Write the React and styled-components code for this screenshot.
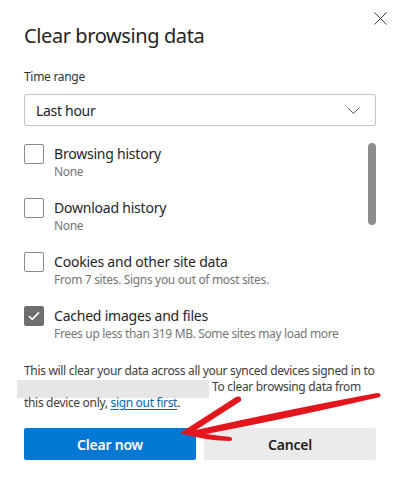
import React from 'react';
import styled, { createGlobalStyle } from 'styled-components';

const GlobalStyle = createGlobalStyle`
  html, body {
    margin: 0;
    padding: 0;
    background: #ffffff;
  }
  body {
    font-family: 'Noto Sans', 'Segoe UI', sans-serif;
    color: #1f1f1f;
  }
`;

const Dialog = styled.div`
  position: relative;
  width: 400px;
  height: 484px;
  box-sizing: border-box;
  padding: 22px 24px 0;
  background: #ffffff;
  overflow: hidden;
`;

const CloseButton = styled.button`
  position: absolute;
  top: 8px;
  right: 10px;
  width: 20px;
  height: 20px;
  padding: 0;
  border: none;
  background: transparent;
  display: flex;
  align-items: center;
  justify-content: center;
  color: #3a3a3a;
`;

const Title = styled.h1`
  margin: 0;
  font-size: 20px;
  line-height: 28px;
  font-weight: 400;
  letter-spacing: -0.4px;
  color: #242424;
`;

const FieldLabel = styled.div`
  margin-top: 19px;
  font-size: 12px;
  line-height: 16px;
  letter-spacing: -0.3px;
  color: #333333;
`;

const Select = styled.div`
  margin-top: 9px;
  height: 32px;
  box-sizing: border-box;
  border: 1px solid #c4c4c4;
  border-radius: 2px;
  display: flex;
  align-items: center;
  justify-content: space-between;
  padding: 0 15px 0 11px;
  font-size: 14px;
  letter-spacing: -0.3px;
  color: #242424;
`;

const ListArea = styled.div`
  display: flex;
  padding-top: 18px;
  height: 216px;
  box-sizing: border-box;
`;

const Items = styled.div`
  flex: 1;
  display: flex;
  flex-direction: column;
  gap: 18px;
`;

const Thumb = styled.div`
  width: 8px;
  height: 82px;
  margin-top: -1px;
  border-radius: 4px;
  background: #8c8c8c;
`;

const Row = styled.label`
  display: flex;
  align-items: flex-start;
  gap: 10px;
`;

const Box = styled.span`
  width: 20px;
  height: 20px;
  box-sizing: border-box;
  border-radius: 2px;
  border: 1px solid ${p => (p.$checked ? '#6e6e6e' : '#8a8a8a')};
  background: ${p => (p.$checked ? '#6e6e6e' : '#ffffff')};
  display: flex;
  align-items: center;
  justify-content: center;
  flex-shrink: 0;
`;

const RowText = styled.div`
  display: flex;
  flex-direction: column;
`;

const RowLabel = styled.span`
  font-size: 14px;
  line-height: 20px;
  letter-spacing: -0.22px;
  color: #262626;
`;

const RowSub = styled.span`
  font-size: 12px;
  line-height: 16px;
  letter-spacing: -0.34px;
  color: #767676;
`;

const Notice = styled.p`
  margin: 21px 0 0;
  font-size: 12px;
  line-height: 16px;
  letter-spacing: -0.32px;
  color: #3d3d3d;
  white-space: nowrap;
`;

const Redacted = styled.span`
  display: inline-block;
  vertical-align: top;
  width: 192px;
  height: 18px;
  margin: 1px 3px -3px -7px;
  background: #e6e6e6;
`;

const Link = styled.a`
  color: #0067b8;
  text-decoration: underline;
  text-underline-offset: 2px;
`;

const Actions = styled.div`
  margin-top: 17px;
  display: grid;
  grid-template-columns: 1fr 1fr;
  gap: 8px;
`;

const Button = styled.button`
  height: 32px;
  border: none;
  border-radius: 2px;
  font-family: inherit;
  font-size: 14px;
  font-weight: 600;
  letter-spacing: -0.2px;
  background: ${p => (p.$primary ? '#0078d4' : '#ebebeb')};
  color: ${p => (p.$primary ? '#ffffff' : '#1f1f1f')};
`;

const Scribble = styled.svg`
  position: absolute;
  left: 0;
  top: 0;
  pointer-events: none;
`;

const items = [
  { label: 'Browsing history', sub: 'None' },
  { label: 'Download history', sub: 'None' },
  { label: 'Cookies and other site data', sub: 'From 7 sites. Signs you out of most sites.' },
  { label: 'Cached images and files', sub: 'Frees up less than 319 MB. Some sites may load more', checked: true },
];

export default function App() {
  return (
    <>
      <GlobalStyle />
      <Dialog>
        <CloseButton aria-label="Close">
          <svg width="13" height="13" viewBox="0 0 13 13">
            <path d="M0.5 0.5 L12.5 12.5 M12.5 0.5 L0.5 12.5" stroke="currentColor" strokeWidth="1" />
          </svg>
        </CloseButton>
        <Title>Clear browsing data</Title>
        <FieldLabel>Time range</FieldLabel>
        <Select>
          <span>Last hour</span>
          <svg width="13" height="7" viewBox="0 0 13 7">
            <path d="M0.5 0.5 L6.5 6.5 L12.5 0.5" fill="none" stroke="#555" strokeWidth="1" />
          </svg>
        </Select>
        <ListArea>
          <Items>
            {items.map(it => (
              <Row key={it.label}>
                <Box $checked={it.checked}>
                  {it.checked && (
                    <svg width="12" height="10" viewBox="0 0 12 10">
                      <path d="M1 5.2 L4.3 8.4 L11 1.4" fill="none" stroke="#fff" strokeWidth="1.6" />
                    </svg>
                  )}
                </Box>
                <RowText>
                  <RowLabel>{it.label}</RowLabel>
                  <RowSub>{it.sub}</RowSub>
                </RowText>
              </Row>
            ))}
          </Items>
          <Thumb />
        </ListArea>
        <Notice>
          This will clear your data across all your synced devices signed in to
          <br />
          <Redacted />To clear browsing data from
          <br />
          this device only, <Link href="#">sign out first</Link>.
        </Notice>
        <Actions>
          <Button $primary>Clear now</Button>
          <Button>Cancel</Button>
        </Actions>
        <Scribble width="400" height="484" viewBox="0 0 400 484">
          <path
            d="M180 433 L236 397 Q242 395 241 401 L196 430 Q285 410 377 393 Q382 393 380 397 Q290 418 206 434 Q220 436 231 437 Q234 441 229 441 Q202 440 180 433 Z"
            fill="#e3161d"
          />
        </Scribble>
      </Dialog>
    </>
  );
}
